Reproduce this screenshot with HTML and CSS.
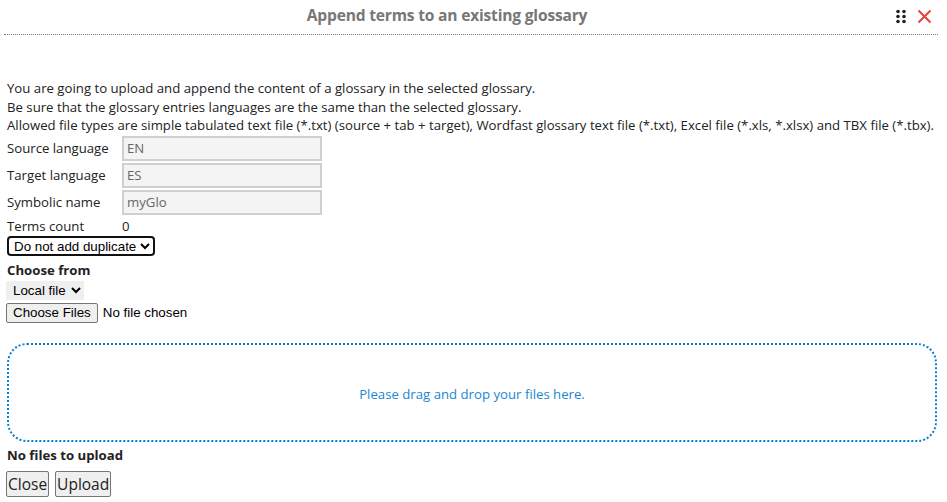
FILE: index.html
```html
<!DOCTYPE html>
<html>
<head>
<meta charset="utf-8">
<link rel="stylesheet" href="styles.css">
</head>
<body>
<div class="dialog">
  <div class="header">
    <div class="title">Append terms to an existing glossary</div>
    <div class="tools">
      <svg class="grip" width="10" height="15" viewBox="0 0 10 15"><circle cx="2" cy="2.5" r="1.8"/><circle cx="8" cy="2.5" r="1.8"/><circle cx="2" cy="7.5" r="1.8"/><circle cx="8" cy="7.5" r="1.8"/><circle cx="2" cy="12.5" r="1.8"/><circle cx="8" cy="12.5" r="1.8"/></svg>
      <svg class="close" width="15" height="15" viewBox="0 0 15 15"><path d="M1.5 1.5 L13.5 13.5 M13.5 1.5 L1.5 13.5" stroke="#e8423a" stroke-width="2" fill="none"/></svg>
    </div>
  </div>
  <div class="content">
    <p class="intro">You are going to upload and append the content of a glossary in the selected glossary.<br>Be sure that the glossary entries languages are the same than the selected glossary.<br>Allowed file types are simple tabulated text file (*.txt) (source + tab + target), Wordfast glossary text file (*.txt), Excel file (*.xls, *.xlsx) and TBX file (*.tbx).</p>
    <div class="form">
      <label>Source language</label><input class="field" value="EN" disabled>
      <label>Target language</label><input class="field" value="ES" disabled>
      <label>Symbolic name</label><input class="field" value="myGlo" disabled>
      <label class="last">Terms count</label><span class="count">0</span>
    </div>
    <select class="dup"><option>Do not add duplicate</option></select>
    <div class="bold choose">Choose from</div>
    <select class="src"><option>Local file</option></select>
    <div class="filerow"><button class="filebtn">Choose Files</button><span class="nofile">No file chosen</span></div>
    <div class="drop">Please drag and drop your files here.</div>
    <div class="bold nofiles">No files to upload</div>
    <div class="actions"><button class="act">Close</button><button class="act">Upload</button></div>
  </div>
</div>
</body>
</html>
```
FILE: styles.css
```css
html, body { margin: 0; padding: 0; background: #fff; }
body { font-family: "Open Sans", "Noto Sans", sans-serif; font-size: 13.2px; color: #222; }
.header {
  position: relative;
  height: 34px;
  margin: 0 9px 0 4px;
  padding-right: 48px;
  border-bottom: 1px dotted #777;
  display: flex; align-items: center; justify-content: center;
}
.title { font-weight: bold; color: #777; font-size: 15.6px; letter-spacing: -0.2px; margin-top: -4px; }
.tools { position: absolute; right: 6px; top: 9px; display: flex; gap: 11px; align-items: center; }
.grip { fill: #222; }
.content { padding: 0 10px 0 7px; }
.intro { margin: 44px 0 0; line-height: 18.6px; white-space: nowrap; }
.form {
  display: grid;
  grid-template-columns: 115px 200px;
  grid-template-rows: 27px 27px 27px 18px;
  align-items: center;
  margin-top: 0;
}
.form label { white-space: nowrap; }
.field {
  box-sizing: border-box;
  width: 200px; height: 25px;
  border: 2px solid #cfcfcf;
  background: #f4f4f4;
  color: #666;
  font: inherit;
  padding: 0 3px;
  margin: 0;
}
.form .last, .count { align-self: start; margin-top: 1px; }
.dup {
  display: block;
  font-family: "Liberation Sans", Arial, sans-serif; font-size: 13.33px;
  border: 2px solid #111; border-radius: 4px;
  background: #fff; color: #000;
  height: 20px; padding: 0 0 0 1px; margin: 2px 0 0 0;
}
.bold { font-weight: bold; }
.choose { margin-top: 5px; line-height: 18px; }
.src {
  display: block;
  font-family: "Liberation Sans", Arial, sans-serif; font-size: 13.33px;
  border: none; background: #efefef; color: #000;
  height: 19px; margin: 2px 0 0 -1px; padding: 0 2px 0 3px;
}
.filerow { display: flex; align-items: center; margin-top: 3px; margin-left: -1px; }
.filebtn {
  font-family: "Liberation Sans", Arial, sans-serif; font-size: 13.33px;
  background: #efefef; border: 1px solid #767676; border-radius: 2px;
  height: 20px; padding: 0 6px; color: #000;
}
.nofile { font-family: "Liberation Sans", Arial, sans-serif; font-size: 13.33px; margin-left: 5px; color: #000; }
.drop {
  box-sizing: border-box;
  margin-top: 20px;
  height: 99px;
  padding-top: 4px;
  border: 2px dotted #0a7fd0;
  border-radius: 20px;
  display: flex; align-items: center; justify-content: center;
  color: #1a86cf;
}
.nofiles { margin-top: 4px; line-height: 18px; }
.actions { display: flex; gap: 6px; margin-top: 7px; margin-left: -1px; }
.act {
  font-family: inherit; font-size: 15.5px;
  background: #efefef; border: 1px solid #767676; border-radius: 2px;
  height: 26px; padding: 0 1px; color: #222;
}
```
